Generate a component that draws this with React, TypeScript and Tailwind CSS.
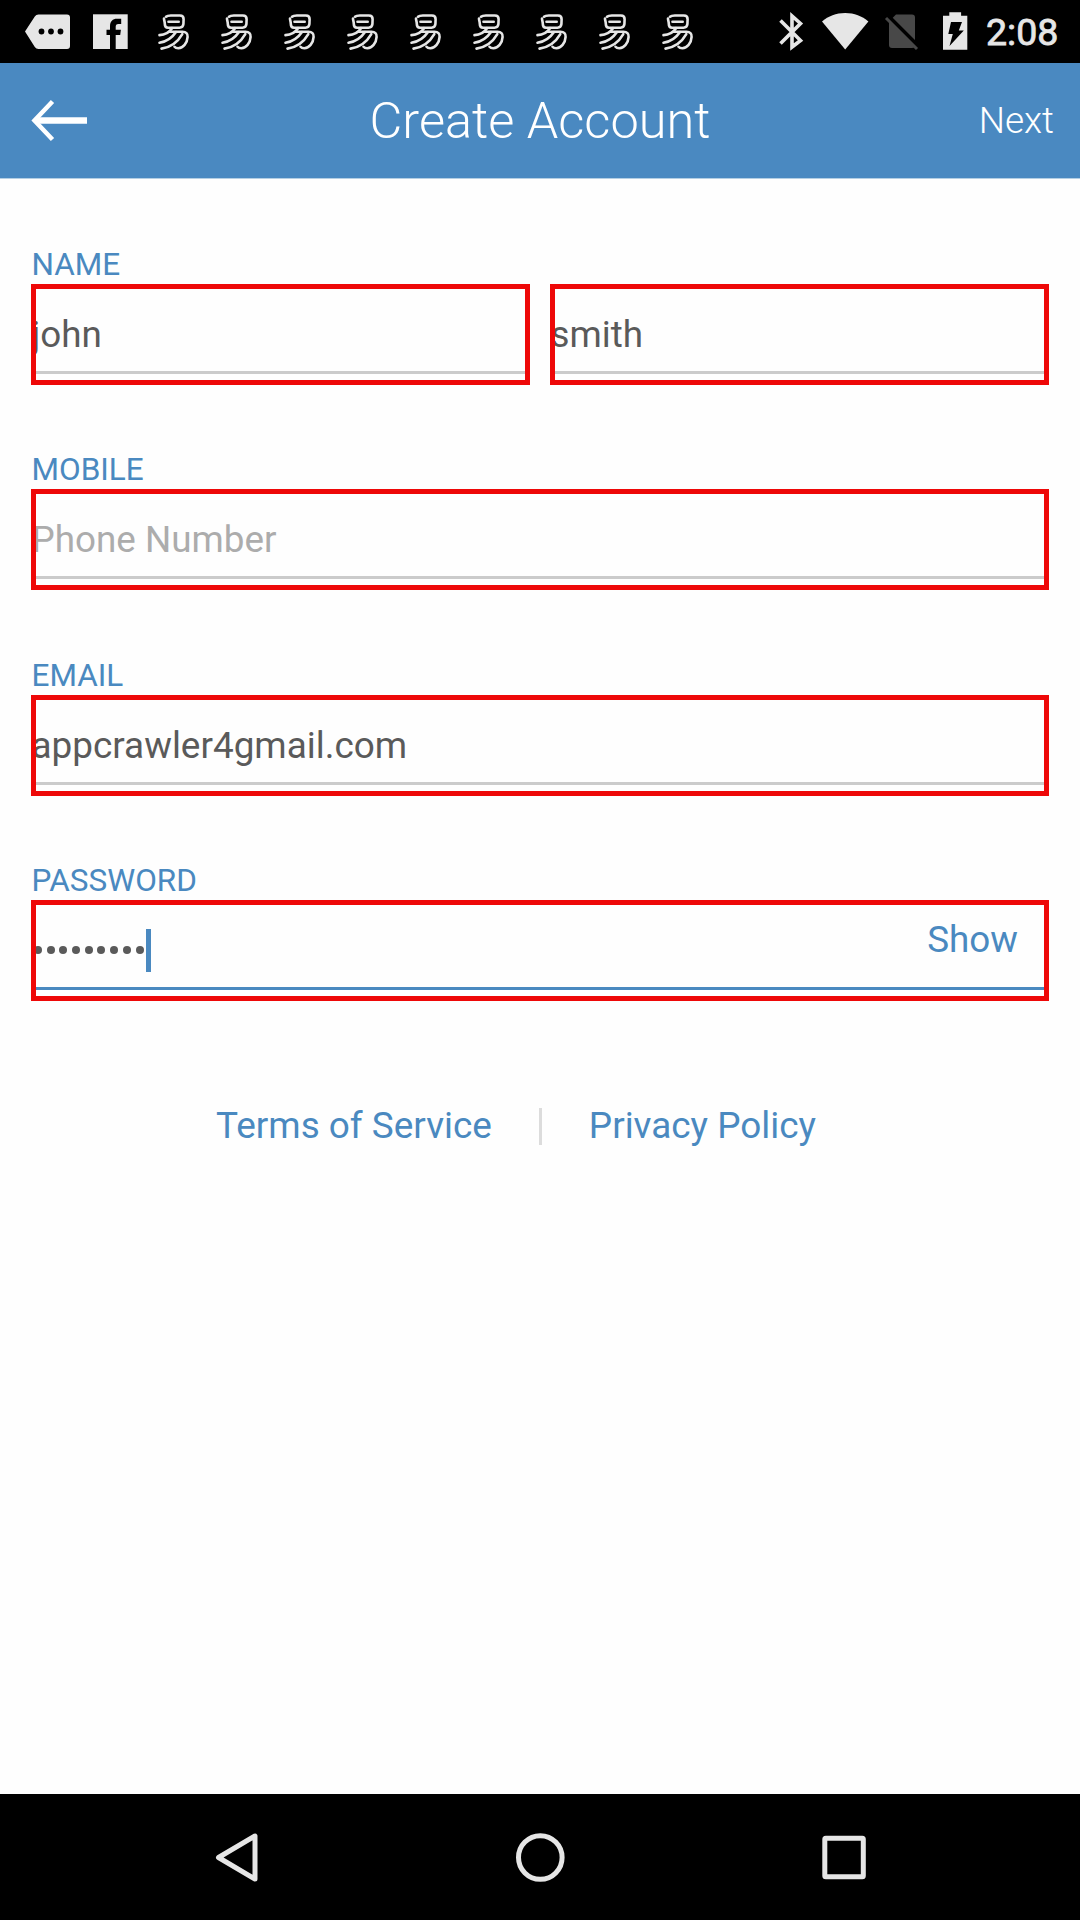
import React from "react";

const fg = "#e6e6e6";

function Glyph({ x, w, children }: { x: number; w: number; children: React.ReactNode }) {
  return (
    <svg width={w} height={63} viewBox={`${x} 0 ${w} 63`} className="block shrink-0">
      {children}
    </svg>
  );
}

function YiIcon() {
  return (
    <Glyph x={142} w={63}>
      <g fill="none" stroke={fg} strokeWidth="2.6" strokeLinecap="round" strokeLinejoin="round">
        <path d="M164 18.500c0 2 .8 2.800 .8 5.500 0 2.800 1 3.700 3.200 3.700h11.500c2.600 0 3.600-.8 3.900-3.500l.2-5c0-2.600-1.200-3.700-3.700-3.700h-9c-2.200 0-3.800 .2-4.900 1.200" />
        <path d="M168.500 21.700h10.200" />
        <path d="M172 28.200c-2.500 3.900-6.500 6.600-12.500 6.900" />
        <path d="M169.500 31.800h13c3.600 0 5.300 1.700 5.100 5-.4 6.500-4.500 11.300-9.300 11.500-1.800 0-3-.5-3.800-1.500" />
        <path d="M176 32c-3.800 5.700-9 9.500-16.500 10.800" />
        <path d="M182.300 34.200c-4.300 7.600-11.600 13.200-20.800 14.400" />
      </g>
    </Glyph>
  );
}

function StatusBar() {
  return (
    <header className="flex h-[63px] items-center bg-black pl-4">
      <Glyph x={16} w={63}>
        <path d="M25 31.500 34.800 16.500q1.300-2 3.700-2H67q3 0 3 3v28.500q0 3-3 3H38.500q-2.400 0-3.700-2z" fill={fg} />
        <circle cx="41.500" cy="31.500" r="2.900" fill="#000" />
        <circle cx="51" cy="31.500" r="2.900" fill="#000" />
        <circle cx="60.500" cy="31.500" r="2.900" fill="#000" />
      </Glyph>
      <Glyph x={79} w={63}>
        <rect x="93" y="14.300" width="34.700" height="34.700" fill={fg} />
        <path d="M110 49V35h-3.500v-5.200h3.500v-3.500c0-5 2.700-7.500 7-7.500h4.200v5.200h-2.700c-2.200 0-2.800 1-2.800 3v2.800h5.200l-.7 5.200h-4.500v14z" fill="#000" />
      </Glyph>
      {Array.from({ length: 9 }, (_, i) => (
        <YiIcon key={i} />
      ))}
      <div className="flex-1" />
      <Glyph x={774} w={38}>
        <path d="M780.500 20.500 800.500 40.500 792 47V16L800.500 23.500 780.500 43.500" fill="none" stroke={fg} strokeWidth="3.600" strokeLinejoin="miter" />
      </Glyph>
      <Glyph x={812} w={66}>
        <path d="M822 21.500C828.500 16 836 13 845.200 13s16.700 3 23.200 8.500L845.200 49.500z" fill={fg} />
      </Glyph>
      <Glyph x={878} w={50}>
        <path d="M889 21.500 896 14.500h16q3 0 3 3V45q0 3-3 3h-20q-3 0-3-3z" fill="#484848" />
        <path d="M887.500 15.500 919.500 47.500" stroke="#000" strokeWidth="4" />
        <path d="M886 18 917 49" stroke="#484848" strokeWidth="3" />
      </Glyph>
      <Glyph x={928} w={58}>
        <path d="M949.300 12.300h11.800v3.500h6.200V49.800h-24.300V15.800h6.300z" fill={fg} />
        <path d="M951 22h11l-3.200 8.500h5L949.500 46l3.300-12h-4.500z" fill="#000" />
      </Glyph>
      <span className="relative top-[1.500px] w-[94px] text-[37.500px] leading-none text-[#e6e6e6] [-webkit-text-stroke:0.800px_#e6e6e6]">
        2:08
      </span>
    </header>
  );
}

function Field({ label, children, active = false }: { label?: string; children: React.ReactNode; active?: boolean }) {
  return (
    <div className="min-w-0 flex-1">
      <div className="h-9 whitespace-nowrap pl-[0.500px] pt-[2px] text-[31.500px] leading-9 text-[#4a89c0]">{label}</div>
      <div className="relative mt-[3px] h-[101px] overflow-hidden">
        <div className={active ? "h-[90px] border-b-[3px] border-[#4a89c0]" : "h-[90px] border-b-[3px] border-[#cbcbcb]"}>
          {children}
        </div>
        <div className="absolute inset-0 border-[5px] border-[#ee0808]" />
      </div>
    </div>
  );
}

export default function App() {
  return (
    <div className="flex h-[1920px] w-[1080px] flex-col overflow-hidden bg-[#fefefe] font-['Roboto',sans-serif]">
      <StatusBar />
      <div className="grid h-[115px] grid-cols-[1fr_auto_1fr] items-center bg-[#4a89c1] text-white shadow-[0_1px_0_#b4cfe4]">
        <svg width="60" height="44" viewBox="31 98.500 60 44" className="ml-[31px]">
          <path d="M87 120H36" stroke="#fff" strokeWidth="6.500" fill="none" />
          <path d="M52.500 101 34.500 120 52.500 139" stroke="#fff" strokeWidth="4.500" fill="none" />
        </svg>
        <h1 className="pt-[2px] text-[50.500px] font-light leading-none">Create Account</h1>
        <span className="mr-[26px] justify-self-end text-[37px] font-light leading-none">Next</span>
      </div>

      <main className="flex-1 px-[31px] pt-[67px]">
        <div className="flex gap-5">
          <Field label="NAME">
            <div className="pl-[0.500px] pt-[29px] text-[36.800px] leading-[44px] text-[#5a5a5a]">john</div>
          </Field>
          <Field>
            <div className="pl-[0.500px] pt-[29px] text-[36.800px] leading-[44px] text-[#5a5a5a]">smith</div>
          </Field>
        </div>
        <div className="mt-[65px] flex">
          <Field label="MOBILE">
            <div className="pl-[0.500px] pt-[29px] text-[36.800px] leading-[44px] text-[#acacac]">Phone Number</div>
          </Field>
        </div>
        <div className="mt-[66px] flex">
          <Field label="EMAIL">
            <div className="pl-[0.500px] pt-[29px] text-[36.900px] leading-[44px] text-[#5a5a5a]">appcrawler4gmail.com</div>
          </Field>
        </div>
        <div className="mt-[65px] flex">
          <Field label="PASSWORD" active>
            <div className="flex">
              <div className="mt-[45.500px] flex h-2 gap-[4.700px] pl-[3px]">
                {Array.from({ length: 9 }, (_, i) => (
                  <span key={i} className="size-[8px] rounded-full bg-[#5a5a5a]" />
                ))}
              </div>
              <div className="ml-[2.400px] mt-[29px] h-[43px] w-[5px] bg-[#4a89c0]" />
              <span className="ml-auto mr-[31px] mt-[18px] text-[36.800px] leading-[44px] text-[#4a89c0]">Show</span>
            </div>
          </Field>
        </div>
        <div className="mt-[103px] flex items-center pl-[185px] text-[36.900px] leading-[44px] text-[#4a89c0]">
          <span>Terms of Service</span>
          <span className="ml-[47px] mr-[47px] h-[37px] w-[3px] bg-[#dcdcdc]" />
          <span>Privacy Policy</span>
        </div>
      </main>

      <nav className="flex h-[126px] items-center justify-center bg-black">
        <svg width="304" height="126" viewBox="84 1794 304 126" fill="none" stroke={fg} strokeWidth="5">
          <path d="M218.500 1857.500 255 1836v43z" strokeLinejoin="round" />
        </svg>
        <svg width="304" height="126" viewBox="388 1794 304 126" fill="none" stroke={fg} strokeWidth="5">
          <circle cx="540.300" cy="1857.500" r="21.800" />
        </svg>
        <svg width="304" height="126" viewBox="692 1794 304 126" fill="none" stroke={fg} strokeWidth="5">
          <rect x="824.800" y="1838.200" width="38.500" height="38.500" rx="1" />
        </svg>
      </nav>
    </div>
  );
}
